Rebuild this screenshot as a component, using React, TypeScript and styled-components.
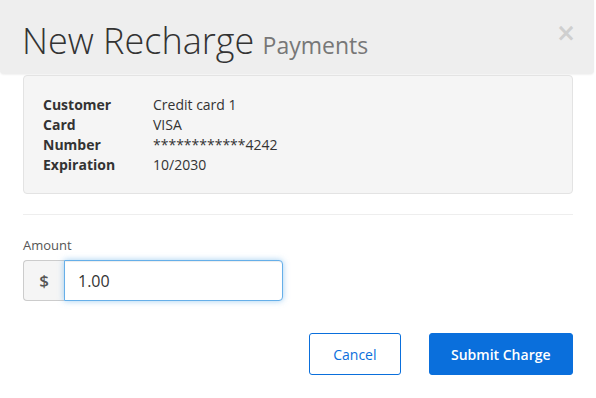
import React from "react";
import styled, { createGlobalStyle } from "styled-components";

const GlobalStyle = createGlobalStyle`
  html, body {
    margin: 0;
    padding: 0;
    background: #fff;
    font-family: "Open Sans", "Liberation Sans", sans-serif;
    color: #333;
  }
  * { box-sizing: border-box; }
`;

const Modal = styled.div`
  width: 594px;
  height: 398px;
  background: #fff;
`;

const Header = styled.div`
  height: 74px;
  background: #eeeeee;
  border-bottom-left-radius: 4px;
  border-bottom-right-radius: 4px;
  box-shadow: 0 1px 2px rgba(0, 0, 0, 0.06);
  display: flex;
  align-items: flex-start;
  justify-content: space-between;
  padding: 17px 22px 0 22px;
`;

const Title = styled.h1`
  margin: 0;
  font-size: 36px;
  font-weight: 300;
  line-height: 48px;
  color: #333;
  letter-spacing: 0;
`;

const Sub = styled.small`
  font-size: 23px;
  font-weight: 400;
  color: #777;
  margin-left: -1px;
`;

const Close = styled.span`
  font-size: 24px;
  font-weight: 700;
  color: #cfcfcf;
  line-height: 1;
  margin-top: 4px;
  margin-right: -4px;
  font-family: "DejaVu Sans", sans-serif;
`;

const Body = styled.div`
  padding: 1px 21px 0 23px;
`;

const Card = styled.div`
  background: #f5f5f5;
  border: 1px solid #e3e3e3;
  border-radius: 4px;
  padding: 19px 19px 18px 19px;
  display: grid;
  grid-template-columns: 110px 1fr;
`;

const Label = styled.div`
  font-size: 14px;
  font-weight: 700;
  line-height: 20px;
  color: #333;
`;

const Value = styled.div`
  font-size: 14px;
  line-height: 20px;
  color: #333;
`;

const Divider = styled.hr`
  border: 0;
  border-top: 1px solid #eee;
  margin: 20px 0 0 0;
`;

const Field = styled.div`
  margin-top: 21px;
`;

const FieldLabel = styled.label`
  display: block;
  font-size: 13px;
  color: #555;
  line-height: 18px;
  margin-bottom: 6px;
`;

const InputGroup = styled.div`
  display: flex;
  width: 260px;
  height: 41px;
`;

const Addon = styled.span`
  width: 41px;
  display: flex;
  align-items: center;
  justify-content: center;
  background: #f5f5f5;
  border: 1px solid #ccc;
  border-right: 0;
  border-radius: 4px 0 0 4px;
  font-size: 17px;
  font-weight: 600;
  color: #555;
`;

const Input = styled.input`
  flex: 1;
  min-width: 0;
  border: 1px solid #66afe9;
  border-radius: 0 4px 4px 0;
  box-shadow: inset 0 1px 1px rgba(0, 0, 0, 0.075), 0 0 6px rgba(102, 175, 233, 0.6);
  padding: 0 13px;
  font-family: "Open Sans", "Liberation Sans", sans-serif;
  font-size: 16px;
  color: #333;
  outline: none;
`;

const Footer = styled.div`
  display: flex;
  justify-content: flex-end;
  gap: 28px;
  margin-top: 32px;
`;

const Button = styled.button<{ $primary?: boolean }>`
  height: 42px;
  padding: 0 ${(p) => (p.$primary ? "21.5px" : "23px")};
  border-radius: 3px;
  font-family: "Open Sans", "Liberation Sans", sans-serif;
  font-size: 14px;
  font-weight: ${(p) => (p.$primary ? 600 : 400)};
  border: 1px solid #0a6fdc;
  background: ${(p) => (p.$primary ? "#0a6fdc" : "#fff")};
  color: ${(p) => (p.$primary ? "#fff" : "#0a6fdc")};
  cursor: pointer;
`;

const rows: [string, string][] = [
  ["Customer", "Credit card 1"],
  ["Card", "VISA"],
  ["Number", "************4242"],
  ["Expiration", "10/2030"],
];

export default function App() {
  return (
    <>
      <GlobalStyle />
      <Modal>
        <Header>
          <Title>
            New Recharge <Sub>Payments</Sub>
          </Title>
          <Close>×</Close>
        </Header>
        <Body>
          <Card>
            {rows.map(([k, v]) => (
              <React.Fragment key={k}>
                <Label>{k}</Label>
                <Value>{v}</Value>
              </React.Fragment>
            ))}
          </Card>
          <Divider />
          <Field>
            <FieldLabel>Amount</FieldLabel>
            <InputGroup>
              <Addon>$</Addon>
              <Input defaultValue="1.00" />
            </InputGroup>
          </Field>
          <Footer>
            <Button>Cancel</Button>
            <Button $primary>Submit Charge</Button>
          </Footer>
        </Body>
      </Modal>
    </>
  );
}
